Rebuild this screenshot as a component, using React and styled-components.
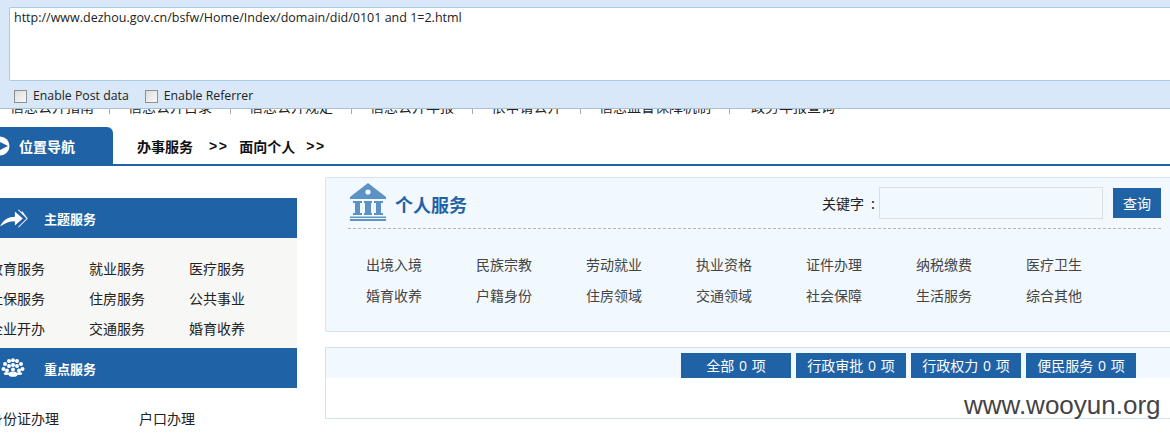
import React from "react";
import styled, { createGlobalStyle } from "styled-components";

const Global = createGlobalStyle`
  html, body { margin: 0; padding: 0; background: #fff; }
  body { width: 1170px; height: 434px; overflow: hidden; font-family: "Noto Sans CJK SC", "Liberation Sans", sans-serif; position: relative; }
  * { box-sizing: border-box; }
`;
const Toolbar = styled.div`
  height: 109px; background: #d9e8f8; border-bottom: 1px solid #a9bfd6;
  padding: 7px 0 0 9px; overflow: hidden;
`;
const UrlBox = styled.div`
  height: 74px; margin-right: -8px; background: #fff; border: 1px solid #a8cbe8; border-radius: 2px;
  padding: 2px 0 0 4px; font: 12.5px/16px "Open Sans", sans-serif; color: #222;
`;
const Options = styled.div`
  display: flex; align-items: center; height: 30px; padding-left: 5px; font: 12.3px/16px "Open Sans", sans-serif; color: #222;
`;
const Check = styled.input.attrs({ type: "checkbox" })`
  appearance: none; margin: 0 6px 0 0; width: 13px; height: 13px; border: 1px solid #8e8f8f;
  background: linear-gradient(135deg, #dcdcdc, #fafafa);
`;
const OptionLabel = styled.label`
  display: flex; align-items: center; margin-right: 16px;
`;
const TopNav = styled.div`
  height: 5px; overflow: hidden; display: flex; align-items: flex-end; margin-left: -5px;
`;
const TopNavItem = styled.div`
  flex: none; width: ${p => p.$w}px; height: 5px; border-right: ${p => p.$last ? "none" : "1px solid #aaa"};
  text-align: center; font-size: 14px; line-height: 5px; color: #222; white-space: nowrap; overflow: hidden;
  span { display: block; margin-top: -10px; line-height: 14px; }
`;
const LocationBar = styled.div`
  margin-top: 13px; height: 39px; display: flex; align-items: stretch; border-bottom: 2px solid #1f62a5;
`;
const LocationTab = styled.div`
  width: 113px; background: #1f62a5; border-radius: 0 6px 0 0; display: flex; align-items: center; gap: 8px;
  color: #fff; font-size: 14px; font-weight: 700; overflow: hidden;
`;
const Crumbs = styled.div`
  display: flex; align-items: center; padding-left: 24px; font-size: 14px; font-weight: 700; color: #111;
`;
const Sep = styled.span`
  margin: 0 11px 0 ${p => p.$gap}px; font-family: "Liberation Sans", sans-serif; letter-spacing: 1.5px;
`;
const Main = styled.div`
  display: flex; align-items: flex-start; margin-top: 11px;
`;
const Side = styled.div`
  flex: none; width: 308px; margin-left: -11px; padding-top: 21px;
`;
const SideHead = styled.div`
  height: 40px; background: #1f62a5; color: #fff; font-size: 13px; font-weight: 700;
  display: flex; align-items: center; padding-left: 55px; position: relative;
`;
const SideIcon = styled.svg`
  position: absolute; left: ${p => p.$l}px; top: ${p => p.$t}px;
`;
const SideBody = styled.div`
  height: 110px; background: #f7f7f5; padding-top: 15px;
  display: grid; grid-template-columns: 100px 100px 100px; grid-auto-rows: 30px; align-items: center;
  font-size: 14px; color: #222;
`;
const KeyRow = styled.div`
  display: grid; grid-template-columns: 150px 150px; padding-top: 20px; font-size: 14px; line-height: 20px; color: #222;
`;
const Content = styled.div`
  flex: none; width: 860px; margin-left: 28px;
`;
const ServicePanel = styled.div`
  height: 155px; background: #f1f8fe; border: 1px solid #d2e3f2; padding: 0 23px 0 22px;
  width: 860px; border-radius: 2px 0 0 2px;
`;
const ServiceHead = styled.div`
  height: 51px; border-bottom: 1px dashed #b5b5b5; display: flex; align-items: center;
`;
const BankIcon = styled.svg`
  flex: none; margin: 0 0 3px 1px;
`;
const Title = styled.div`
  font-size: 18px; font-weight: 700; color: #1f62a5; margin-left: 8px; margin-top: 2px;
`;
const Search = styled.div`
  margin-left: auto; display: flex; align-items: center; font-size: 14px; color: #222; white-space: nowrap; word-spacing: 4px;
`;
const SearchInput = styled.div`
  width: 224px; height: 32px; border: 1px solid #dcdfe2; margin-left: 4px;
`;
const SearchBtn = styled.div`
  width: 48px; height: 30px; background: #1f62a5; color: #fff; margin-left: 10px; text-align: center; font-size: 14px; line-height: 30px;
`;
const Grid = styled.div`
  display: grid; grid-template-columns: repeat(7, 110px); grid-auto-rows: 31px; align-items: center;
  padding: 19px 0 0 18px; font-size: 14px; color: #444;
`;
const ResultPanel = styled.div`
  margin-top: 15px; height: 72px; width: 860px; border: 1px solid #cfe3f4;
`;
const ResultBar = styled.div`
  height: 30px; background: #f1f8fe; display: flex; align-items: flex-end; gap: 5px; padding-left: 355px;
`;
const ResultBtn = styled.div`
  width: 110px; height: 25px; background: #1f62a5; color: #fff; text-align: center; font-size: 14px; line-height: 25px;
  word-spacing: 1px; font-family: "Open Sans", "Noto Sans CJK SC", sans-serif;
`;
const Watermark = styled.div`
  position: absolute; left: 964px; top: 389px; font: 26px/32px "Liberation Sans", sans-serif; color: #444;
`;

const topNav = [
  ["信息公开指南", 115], ["信息公开目录", 121], ["信息公开规定", 121], ["信息公开年报", 121],
  ["依申请公开", 108], ["信息监督保障机制", 149], ["政务年报查询", 126, true],
];
const themes = ["教育服务","就业服务","医疗服务","社保服务","住房服务","公共事业","企业开办","交通服务","婚育收养"];
const services = ["出境入境","民族宗教","劳动就业","执业资格","证件办理","纳税缴费","医疗卫生","婚育收养","户籍身份","住房领域","交通领域","社会保障","生活服务","综合其他"];
const results = ["全部 0 项","行政审批 0 项","行政权力 0 项","便民服务 0 项"];

const people = [[8,3],[12,2.2],[16,3],[4,6],[20,6],[8,8],[12,7],[16,8],[2.5,11],[21.5,11],[6,12.5],[18,12.5],[12,11.5]];

export default function App() {
  return (
    <>
      <Global />
      <Toolbar>
        <UrlBox>http://www.dezhou.gov.cn/bsfw/Home/Index/domain/did/0101 and 1=2.html</UrlBox>
        <Options>
          <OptionLabel><Check />Enable Post data</OptionLabel>
          <OptionLabel><Check />Enable Referrer</OptionLabel>
        </Options>
      </Toolbar>
      <TopNav>
        {topNav.map(([t, w, last]) => <TopNavItem key={t} $w={w} $last={last}><span>{t}</span></TopNavItem>)}
      </TopNav>
      <LocationBar>
        <LocationTab>
          <svg width="11" height="20" viewBox="0 0 11 20" style={{ flex: "none" }}>
            <path d="M0 .5A9.5 9.5 0 0 1 0 19.5Z" fill="#fff" />
            <path d="M0 6 L8 10 L0 14Z" fill="#1f62a5" />
          </svg>
          位置导航
        </LocationTab>
        <Crumbs>办事服务<Sep $gap={16}>&gt;&gt;</Sep>面向个人<Sep $gap={11}>&gt;&gt;</Sep></Crumbs>
      </LocationBar>
      <Main>
        <Side>
          <SideHead>
            主题服务
            <SideIcon $l={11} $t={10} width="28" height="21" viewBox="0 0 32 24">
              <path d="M0 21C4 13 10 10 17 10V4L26 12L17 20V15C11 15 6 17 0 21Z" fill="#fff" />
              <path d="M21 2L31 12L21 22M25 4L31 12" fill="none" stroke="#fff" strokeWidth="1.2" />
            </SideIcon>
          </SideHead>
          <SideBody>{themes.map(t => <div key={t}>{t}</div>)}</SideBody>
          <SideHead>
            重点服务
            <SideIcon $l={12} $t={10} width="24" height="19" viewBox="0 0 24 19">
              {people.map(([x, y], i) => <circle key={i} cx={x} cy={y} r="2" fill="#fff" />)}
              <ellipse cx="12" cy="16.2" rx="4.5" ry="2.6" fill="#fff" />
              <ellipse cx="5.5" cy="15.5" rx="2.8" ry="1.6" fill="#fff" />
              <ellipse cx="18.5" cy="15.5" rx="2.8" ry="1.6" fill="#fff" />
            </SideIcon>
          </SideHead>
          <KeyRow><div>身份证办理</div><div>户口办理</div></KeyRow>
        </Side>
        <Content>
          <ServicePanel>
            <ServiceHead>
              <BankIcon width="38" height="38" viewBox="0 0 38 38">
                <path d="M19 0L37 14V16H1V14Z" fill="#5d93c4" />
                <circle cx="19" cy="9" r="2.6" fill="#f1f8fe" />
                <path d="M4 18H13V20H11V30H13V32H4V30H6V20H4ZM15 18H23V20H22V30H23V32H15V30H16V20H15ZM25 18H34V20H32V30H34V32H25V30H27V20H25Z" fill="#5d93c4" />
                <rect x="1" y="33.5" width="36" height="1.5" fill="#5d93c4" />
                <rect x="1" y="36" width="36" height="2" fill="#5d93c4" />
              </BankIcon>
              <Title>个人服务</Title>
              <Search>
                关键字 :
                <SearchInput />
                <SearchBtn>查询</SearchBtn>
              </Search>
            </ServiceHead>
            <Grid>{services.map(t => <div key={t}>{t}</div>)}</Grid>
          </ServicePanel>
          <ResultPanel>
            <ResultBar>{results.map(t => <ResultBtn key={t}>{t}</ResultBtn>)}</ResultBar>
          </ResultPanel>
        </Content>
      </Main>
      <Watermark>www.wooyun.org</Watermark>
    </>
  );
}
